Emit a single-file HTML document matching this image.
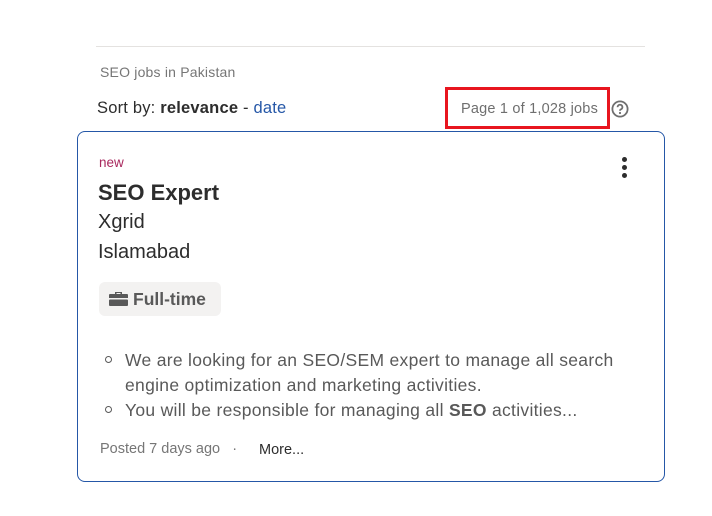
<!DOCTYPE html>
<html><head><meta charset="utf-8"><style>
body{margin:0;width:712px;height:516px;background:#fff;font-family:"Liberation Sans",sans-serif;position:relative;overflow:hidden;color:#2d2d2d}
.a{position:absolute;white-space:nowrap}
</style></head><body>
<div class="a" style="left:96px;top:46px;width:549px;height:1px;background:#e4e2e0"></div>
<div class="a" style="left:100px;top:64px;font-size:14px;color:#767676;letter-spacing:0.2px">SEO jobs in Pakistan</div>
<div class="a" style="left:97px;top:99px;font-size:16.5px;color:#2d2d2d;letter-spacing:0.2px">Sort by: <b>relevance</b> - <span style="color:#2557a7">date</span></div>
<div class="a" style="left:445px;top:87px;width:159px;height:36px;border:3px solid #e8151f"></div>
<div class="a" style="left:461px;top:101px;font-size:14.5px;color:#6f6f6f;letter-spacing:0.2px">Page 1 of 1,028 jobs</div>
<svg class="a" style="left:611px;top:100px" width="18" height="18" viewBox="0 0 18 18"><circle cx="9" cy="9" r="7.6" fill="none" stroke="#6f6f6f" stroke-width="1.8"/><path d="M6.6 7.2a2.4 2.4 0 1 1 3.4 2.1c-.7.3-1 .8-1 1.5" fill="none" stroke="#6f6f6f" stroke-width="1.8"/><circle cx="9" cy="13" r="1.1" fill="#6f6f6f"/></svg>
<div class="a" style="left:77px;top:131px;width:586px;height:349px;border:1px solid #2557a7;border-radius:8px"></div>
<div class="a" style="left:99px;top:155px;font-size:13.5px;color:#a9295e">new</div>
<div class="a" style="left:98px;top:180px;font-size:22px;font-weight:bold;color:#2d2d2d">SEO Expert</div>
<div class="a" style="left:98px;top:211px;font-size:20px;color:#2d2d2d">Xgrid</div>
<div class="a" style="left:98px;top:241px;font-size:20px;color:#2d2d2d">Islamabad</div>
<div class="a" style="left:622px;top:157px;width:5px;height:5px;border-radius:50%;background:#2d2d2d;box-shadow:0 8px 0 #2d2d2d,0 16px 0 #2d2d2d"></div>
<div class="a" style="left:99px;top:282px;width:122px;height:34px;background:#f3f2f1;border-radius:6px"></div>
<svg class="a" style="left:108px;top:291px" width="21" height="16" viewBox="0 0 21 16"><path d="M7 3V1h7v2h5a1 1 0 0 1 1 1v3H1V4a1 1 0 0 1 1-1zM8.5 3h4V2h-4z" fill="#595959"/><rect x="1" y="8.5" width="19" height="6.5" rx="1" fill="#595959"/></svg>
<div class="a" style="left:133px;top:289px;font-size:17.5px;font-weight:bold;color:#595959">Full-time</div>
<div class="a" style="left:105px;top:356px;width:5px;height:5px;border:1.2px solid #595959;border-radius:50%"></div>
<div class="a" style="left:105px;top:406px;width:5px;height:5px;border:1.2px solid #595959;border-radius:50%"></div>
<div class="a" style="left:125px;top:348px;font-size:17.5px;color:#595959;line-height:25px;letter-spacing:0.3px">We are looking for an SEO/SEM expert to manage all search<br>engine optimization and marketing activities.<br>You will be responsible for managing all <b>SEO</b> activities...</div>
<div class="a" style="left:100px;top:441px;font-size:14.5px;color:#767676">Posted 7 days ago &nbsp;&nbsp;·</div>
<div class="a" style="left:259px;top:442px;font-size:14.5px;color:#2d2d2d">More...</div>
</body></html>
